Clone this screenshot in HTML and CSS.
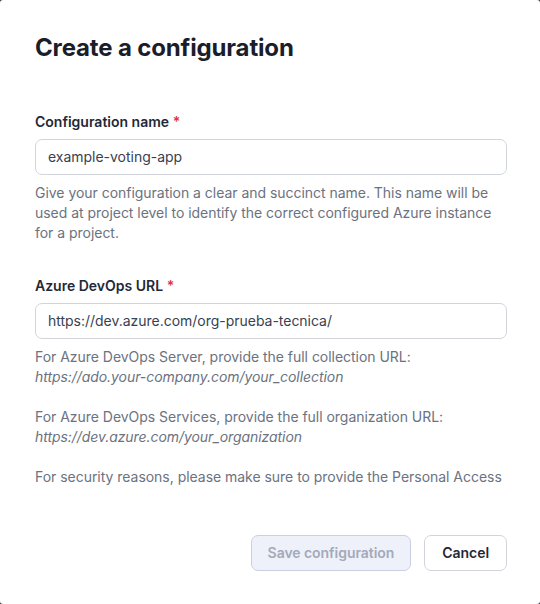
FILE: index.html
```html
<!DOCTYPE html>
<html lang="en">
<head>
<meta charset="utf-8">
<title>Create a configuration</title>
<link rel="stylesheet" href="styles.css">
</head>
<body>
<div class="modal">
  <div class="modal-header">
    <h1 class="title">Create a configuration</h1>
  </div>
  <div class="modal-body">
    <div class="field">
      <label class="label">Configuration name <span class="req">*</span></label>
      <div class="input">example-voting-app</div>
      <div class="help">
        <p>Give your configuration a clear and succinct name. This name will be used at project level to identify the correct configured Azure instance for a project.</p>
      </div>
    </div>
    <div class="field">
      <label class="label">Azure DevOps URL <span class="req">*</span></label>
      <div class="input">https://dev.azure.com/org-prueba-tecnica/</div>
      <div class="help">
        <p>For Azure DevOps Server, provide the full collection URL:<br><em>https://ado.your-company.com/your_collection</em></p>
        <p>For Azure DevOps Services, provide the full organization URL:<br><em>https://dev.azure.com/your_organization</em></p>
        <p>For security reasons, please make sure to provide the Personal Access Token of a user with the minimal permissions required.</p>
      </div>
    </div>
  </div>
  <div class="modal-footer">
    <button class="btn btn-primary" disabled>Save configuration</button>
    <button class="btn btn-secondary">Cancel</button>
  </div>
</div>
</body>
</html>
```

FILE: styles.css
```css
* { box-sizing: border-box; }
html, body { height: 100%; }
body {
  margin: 0;
  background: #3a3d45;
  font-family: Inter, "Noto Sans", sans-serif;
  color: #1f2937;
}
.modal {
  height: 604px;
  width: 540px;
  background: #ffffff;
  border-radius: 3px;
  display: flex;
  flex-direction: column;
  overflow: hidden;
}
.modal-header {
  padding: 32px 35px;
}
.title {
  margin: 0;
  font-size: 24px;
  line-height: 32px;
  font-weight: 650;
  color: #1b1e2a;
  letter-spacing: -0.15px;
}
.modal-body {
  flex: 1;
  overflow: hidden;
  padding: 16px 33px 0 35px;
}
.field + .field { margin-top: 33px; }
.label {
  display: block;
  font-size: 14px;
  line-height: 20px;
  font-weight: 600;
  color: #1f2937;
  margin-bottom: 7px;
}
.req { color: #dc3545; }
.input {
  height: 36px;
  border: 1px solid #d1d5db;
  border-radius: 7px;
  padding: 0 12px;
  font-size: 14px;
  line-height: 34px;
  color: #374151;
  background: #fff;
  letter-spacing: -0.02px;
}
.help {
  margin-top: 8px;
  font-size: 14px;
  line-height: 20px;
  color: #6b7280;
  letter-spacing: -0.03px;
}
.help p { margin: 0; }
.help p + p { margin-top: 20px; }
.help em { font-style: italic; letter-spacing: -0.06px; }
.modal-footer {
  display: flex;
  justify-content: flex-end;
  gap: 13px;
  padding: 47px 33px 33px;
}
.btn {
  height: 36px;
  padding: 0 16px;
  border-radius: 7px;
  font-family: Inter, "Noto Sans", sans-serif;
  font-size: 14px;
  font-weight: 600;
  line-height: 20px;
  cursor: pointer;
  letter-spacing: -0.05px;
}
.btn-primary {
  background: #eef1f9;
  border: 1px solid #c9d0e0;
  color: #a3aabb;
}
.btn-secondary {
  padding: 0 17px;
  background: #ffffff;
  border: 1px solid #d1d5db;
  color: #1f2937;
}
```
